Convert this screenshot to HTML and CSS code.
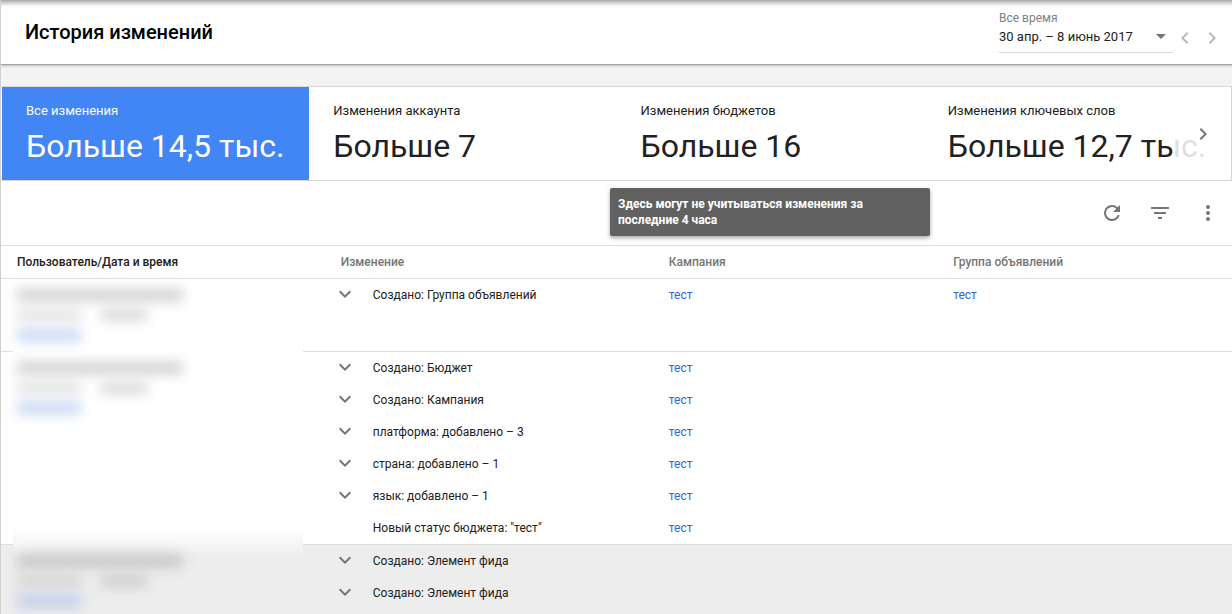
FILE: index.html
```html
<!DOCTYPE html>
<html lang="ru">
<head>
<meta charset="utf-8">
<meta name="viewport" content="width=device-width, initial-scale=1">
<title>История изменений</title>
<link rel="stylesheet" href="styles.css">
</head>
<body>
<svg class="sprite" aria-hidden="true">
  <symbol id="chevron-down" viewBox="0 0 24 24"><path d="M16.6 7.6 12 12.2 7.4 7.6 6 9l6 6 6-6z"/></symbol>
  <symbol id="chevron-left" viewBox="0 0 24 24"><path d="M15.4 7.4 14 6l-6 6 6 6 1.4-1.4-4.6-4.6z"/></symbol>
  <symbol id="chevron-right" viewBox="0 0 24 24"><path d="M10 6 8.6 7.4l4.6 4.6-4.6 4.6L10 18l6-6z"/></symbol>
</svg>
<div class="page">
  <header class="header">
    <h1 class="title">История изменений</h1>
    <div class="period">
      <div class="range">
        <label class="range-label" for="range">Все время</label>
        <div class="range-field">
          <select class="range-select" id="range"><option>30 апр. – 8 июнь 2017</option></select>
          <svg class="range-arrow" viewBox="0 0 10 5" aria-hidden="true"><path d="M0 0h10L5 5z"/></svg>
        </div>
      </div>
      <button class="step" type="button" aria-label="Назад"><svg class="icon"><use href="#chevron-left"/></svg></button>
      <button class="step" type="button" aria-label="Вперед"><svg class="icon"><use href="#chevron-right"/></svg></button>
    </div>
  </header>

  <main class="content">
    <section class="cards">
      <button class="card card-active" type="button"><span class="card-name">Все изменения</span><span class="card-value">Больше 14,5 тыс.</span></button>
      <button class="card" type="button"><span class="card-name">Изменения аккаунта</span><span class="card-value">Больше 7</span></button>
      <button class="card" type="button"><span class="card-name">Изменения бюджетов</span><span class="card-value">Больше 16</span></button>
      <button class="card" type="button"><span class="card-name">Изменения ключевых слов</span><span class="card-value">Больше 12,7 тыс.</span></button>
      <button class="cards-next" type="button" aria-label="Далее"><svg class="icon"><use href="#chevron-right"/></svg></button>
    </section>

    <div class="toolbar">
      <div class="tooltip" role="tooltip">Здесь могут не учитываться изменения за последние 4 часа</div>
      <button class="tool" type="button" aria-label="Обновить"><svg class="icon" viewBox="0 0 24 24"><path d="M17.65 6.35A7.96 7.96 0 0 0 12 4a8 8 0 1 0 7.73 10h-2.08A6 6 0 1 1 12 6c1.66 0 3.14.69 4.22 1.78L13 11h7V4z"/></svg></button>
      <button class="tool" type="button" aria-label="Фильтр"><svg class="icon" viewBox="0 0 24 24"><path d="M10 18h4v-2h-4zM3 6v2h18V6zm3 7h12v-2H6z"/></svg></button>
      <button class="tool" type="button" aria-label="Ещё"><svg class="icon" viewBox="0 0 24 24"><circle cx="12" cy="6" r="2"/><circle cx="12" cy="12" r="2"/><circle cx="12" cy="18" r="2"/></svg></button>
    </div>

    <table class="history">
      <colgroup><col class="col-user"><col class="col-change"><col class="col-campaign"><col></colgroup>
      <thead>
        <tr><th class="sorted" scope="col">Пользователь/Дата и время</th><th scope="col">Изменение</th><th scope="col">Кампания</th><th scope="col">Группа объявлений</th></tr>
      </thead>
      <tbody>
        <tr class="single">
          <td class="user"><div class="hidden-user"><span class="smudge mail"></span><span class="smudge date"></span><span class="smudge time"></span><span class="smudge undo"></span></div></td>
          <td><div class="change"><button class="expand" type="button" aria-label="Развернуть"><svg class="icon"><use href="#chevron-down"/></svg></button><span>Создано: Группа объявлений</span></div></td>
          <td><a class="link" href="#">тест</a></td>
          <td><a class="link" href="#">тест</a></td>
        </tr>
      </tbody>
      <tbody>
        <tr>
          <td class="user" rowspan="6"><div class="hidden-user"><span class="smudge mail"></span><span class="smudge date"></span><span class="smudge time"></span><span class="smudge undo"></span></div></td>
          <td><div class="change"><button class="expand" type="button" aria-label="Развернуть"><svg class="icon"><use href="#chevron-down"/></svg></button><span>Создано: Бюджет</span></div></td>
          <td><a class="link" href="#">тест</a></td><td></td>
        </tr>
        <tr>
          <td><div class="change"><button class="expand" type="button" aria-label="Развернуть"><svg class="icon"><use href="#chevron-down"/></svg></button><span>Создано: Кампания</span></div></td>
          <td><a class="link" href="#">тест</a></td><td></td>
        </tr>
        <tr>
          <td><div class="change"><button class="expand" type="button" aria-label="Развернуть"><svg class="icon"><use href="#chevron-down"/></svg></button><span>платформа: добавлено – 3</span></div></td>
          <td><a class="link" href="#">тест</a></td><td></td>
        </tr>
        <tr>
          <td><div class="change"><button class="expand" type="button" aria-label="Развернуть"><svg class="icon"><use href="#chevron-down"/></svg></button><span>страна: добавлено – 1</span></div></td>
          <td><a class="link" href="#">тест</a></td><td></td>
        </tr>
        <tr>
          <td><div class="change"><button class="expand" type="button" aria-label="Развернуть"><svg class="icon"><use href="#chevron-down"/></svg></button><span>язык: добавлено – 1</span></div></td>
          <td><a class="link" href="#">тест</a></td><td></td>
        </tr>
        <tr>
          <td><div class="change change-plain"><span>Новый статус бюджета: "тест"</span></div></td>
          <td><a class="link" href="#">тест</a></td><td></td>
        </tr>
      </tbody>
      <tbody class="shaded">
        <tr>
          <td class="user" rowspan="2"><div class="hidden-user"><span class="smudge mail"></span><span class="smudge date"></span><span class="smudge time"></span><span class="smudge undo"></span></div></td>
          <td><div class="change"><button class="expand" type="button" aria-label="Развернуть"><svg class="icon"><use href="#chevron-down"/></svg></button><span>Создано: Элемент фида</span></div></td>
          <td></td><td></td>
        </tr>
        <tr>
          <td><div class="change"><button class="expand" type="button" aria-label="Развернуть"><svg class="icon"><use href="#chevron-down"/></svg></button><span>Создано: Элемент фида</span></div></td>
          <td></td><td></td>
        </tr>
      </tbody>
    </table>
  </main>
</div>
</body>
</html>
```
FILE: styles.css
```css
* {
  box-sizing: border-box;
}

body {
  margin: 0;
  background: #fff;
  color: #212121;
  font-family: Roboto, "Noto Sans", sans-serif;
  font-size: 12px;
  line-height: 16px;
}

button,
select {
  margin: 0;
  padding: 0;
  border: 0;
  background: none;
  color: inherit;
  font: inherit;
  cursor: pointer;
}

.sprite {
  display: none;
}

.icon {
  display: block;
  width: 24px;
  height: 24px;
  fill: currentColor;
}

.page {
  height: 100vh;
  overflow: hidden;
  border-left: 1px solid #d0d0d0;
}

/* Header */
.header {
  position: relative;
  display: flex;
  justify-content: space-between;
  align-items: center;
  height: 65px;
  padding: 0 8px 0 24px;
  background: linear-gradient(#a9a9a9, #d4d4d4 3px, #fafafa 6px, #fff 8px);
  border-bottom: 1px solid #a6a6a6;
  box-shadow: 0 1px 2px rgba(0, 0, 0, 0.24);
}

.title {
  margin: 0;
  color: #000;
  font-size: 20px;
  font-weight: 500;
  line-height: 24px;
}

.period {
  display: flex;
  align-items: flex-end;
  padding-bottom: 2px;
}

.range {
  width: 174px;
}

.range-label {
  display: block;
  color: #808080;
}

.range-field {
  display: flex;
  align-items: center;
  height: 27px;
  padding-bottom: 4px;
  border-bottom: 1px solid #dcdcdc;
}

.range-select {
  flex: 1;
  appearance: none;
  font-size: 13px;
}

.range-arrow {
  width: 10px;
  height: 5px;
  margin-right: 7px;
  fill: #757575;
  pointer-events: none;
}

.step {
  margin-bottom: 3px;
  color: #b8b8b8;
}

.step + .step {
  margin-left: 3px;
}

/* Summary cards */
.content {
  padding-top: 21px;
  background: linear-gradient(#f3f3f3 21px, #fff 21px);
}

.cards {
  position: relative;
  display: grid;
  grid-template-columns: repeat(4, 1fr);
  border: 1px solid #d6d6d6;
  border-left-color: #fff;
}

.card {
  display: flex;
  flex-direction: column;
  gap: 9px;
  min-width: 0;
  padding: 16px 24px;
  text-align: left;
  white-space: nowrap;
}

.card-active {
  background: #4285f4;
  color: #fff;
}

.card-name {
  font-size: 13px;
}

.card-value {
  font-size: 32px;
  line-height: 36px;
}

.cards-next {
  position: absolute;
  top: 0;
  right: 0;
  bottom: 0;
  display: flex;
  justify-content: center;
  width: 58px;
  padding: 35px 0 0 2px;
  background: rgba(255, 255, 255, 0.86);
  color: #757575;
}

/* Toolbar */
.toolbar {
  position: relative;
  display: flex;
  justify-content: flex-end;
  align-items: center;
  gap: 24px;
  height: 65px;
  padding-right: 12px;
  border-bottom: 1px solid #dedede;
}

.tool {
  color: #757575;
}

.tooltip {
  position: absolute;
  top: 7px;
  right: 302px;
  width: 320px;
  padding: 8px;
  border-radius: 2px;
  background: #616161;
  color: #fff;
  font-weight: 700;
  box-shadow: 0 2px 4px rgba(0, 0, 0, 0.35);
}

/* Change history */
.history {
  width: 100%;
  table-layout: fixed;
  border-spacing: 0;
}

.col-user {
  width: 26.3%;
}

.col-change {
  width: 26.65%;
}

.col-campaign {
  width: 23.1%;
}

.history th {
  height: 33px;
  padding: 0 16px;
  border-bottom: 1px solid #dedede;
  color: #757575;
  font-weight: 500;
  text-align: left;
}

.history .sorted {
  color: #212121;
}

.history td {
  height: 32px;
  padding: 8px 16px;
  vertical-align: top;
}

.history .single td {
  height: 72px;
}

.history tbody + tbody tr:first-child td {
  height: 33px;
  border-top: 1px solid #dedede;
}

.shaded {
  background: #ededed;
}

.history .shaded tr:last-child td {
  height: 40px;
}

.change {
  display: flex;
  align-items: center;
  gap: 16px;
  height: 16px;
}

.change-plain {
  padding-left: 32px;
}

.expand {
  width: 16px;
  color: #757575;
}

.expand .icon {
  margin: 0 -8px;
}

.link {
  color: #3367d6;
  text-decoration: none;
}

/* Concealed account details */
.history .user {
  padding: 0 22px 0 12px;
}

.hidden-user {
  display: grid;
  grid-template-columns: 64px 1fr;
  gap: 6px 20px;
  margin-top: -1px;
  padding: 10px 16px 0 4px;
  background: #fff;
}

tbody:first-of-type .hidden-user {
  margin-top: 0;
  padding-top: 9px;
}

.shaded .hidden-user {
  margin-top: -16px;
  padding-top: 25px;
  background: linear-gradient(#fff, #ededed 28px);
}

.smudge {
  height: 14px;
  background: #d6d6d6;
  filter: blur(6px);
}

.mail {
  grid-column: 1 / -1;
  width: 166px;
}

.date {
  opacity: 0.6;
}

.time {
  width: 46px;
  opacity: 0.8;
}

.undo {
  background: #cfdcf3;
}

.shaded .smudge {
  background: #cacaca;
}

.shaded .undo {
  background: #c5d2ea;
}
```
